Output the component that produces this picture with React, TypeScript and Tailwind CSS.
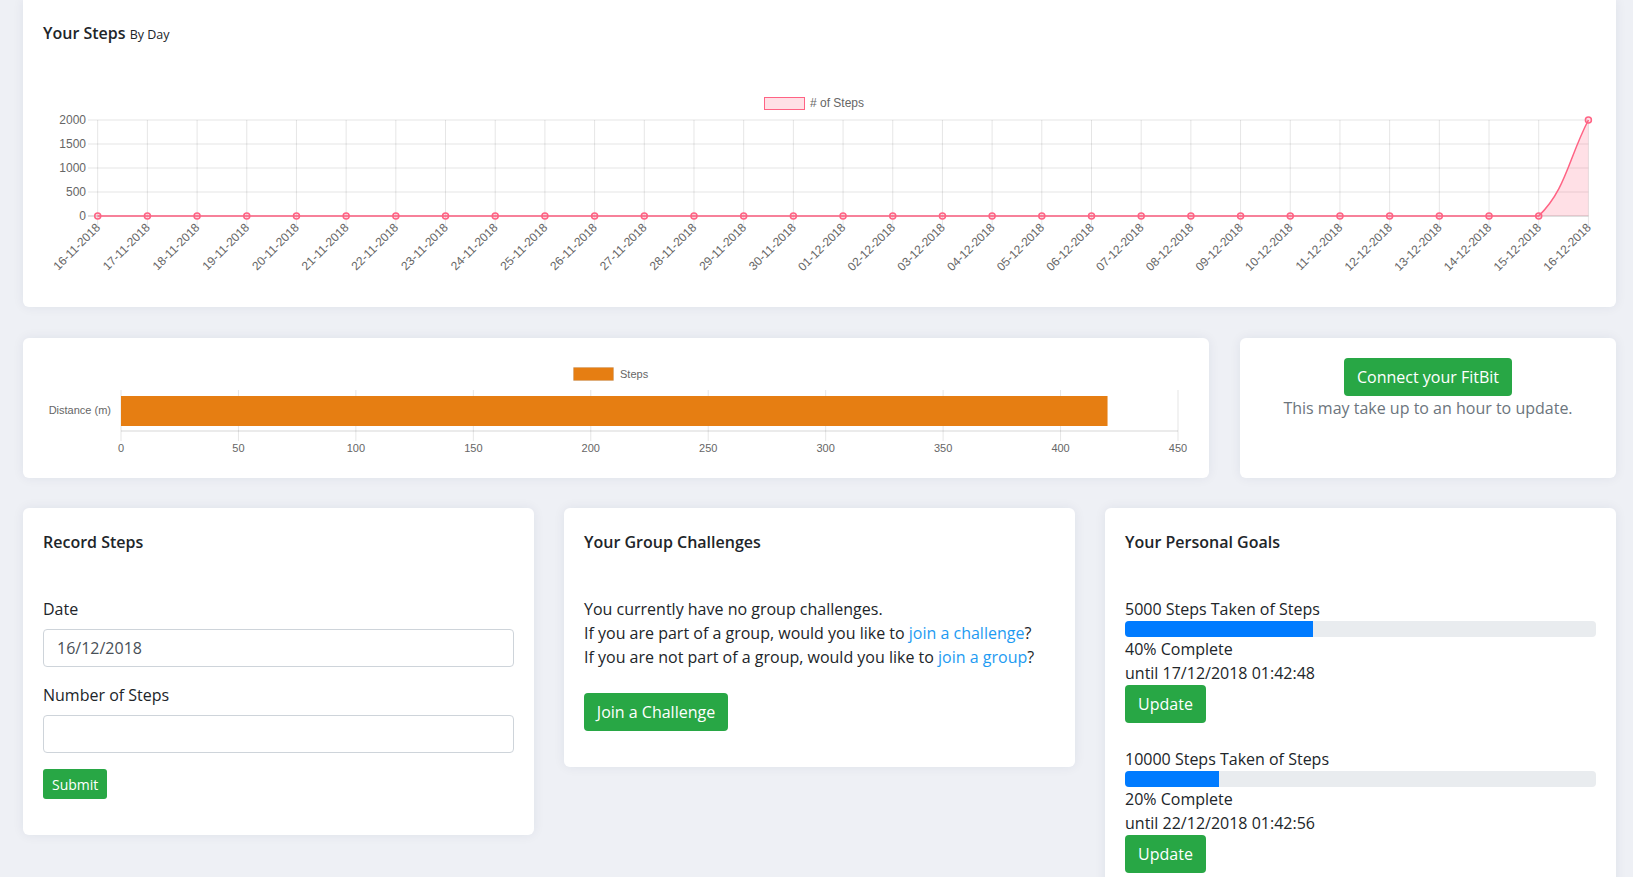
import React from "react";

const days: string[] = [];
for (let d = 16; d <= 30; d++) days.push(`${d}-11-2018`);
for (let d = 1; d <= 16; d++) days.push(`${String(d).padStart(2, "0")}-12-2018`);

const X0 = 97.7;
const X1 = 1588.4;
const STEP = (X1 - X0) / 30;
const TOP = 120;
const BASE = 216;

function StepsChart() {
  const xs = days.map((_, i) => X0 + i * STEP);
  const x29 = xs[29];
  const x30 = xs[30];
  const line = `M ${X0} ${BASE} L ${x29} ${BASE} C ${x29 + 27.2} 189.7 ${x30 - 19.9} 158.4 ${x30} ${TOP}`;
  const area = `${line} L ${x30} ${BASE} Z`;
  return (
    <svg viewBox="23 45 1593 262" width={1593} height={262} className="block" fontFamily="'Liberation Sans', Arial, sans-serif">
      {/* legend */}
      <rect x={764.5} y={97.5} width={40} height={12} fill="rgba(255,99,132,0.2)" stroke="rgb(255,99,132)" />
      <text x={810} y={103.5} fontSize={12} fill="#666" dominantBaseline="middle">
        # of Steps
      </text>
      {/* horizontal grid */}
      {[0, 1, 2, 3].map((k) => (
        <line key={k} x1={88} x2={X1} y1={TOP + k * 24} y2={TOP + k * 24} stroke="rgba(0,0,0,0.1)" />
      ))}
      <line x1={88} x2={X1} y1={BASE} y2={BASE} stroke="rgba(0,0,0,0.25)" />
      {["2000", "1500", "1000", "500", "0"].map((t, k) => (
        <text key={t} x={86} y={TOP + 0.5 + k * 24} fontSize={12} fill="#666" textAnchor="end" dominantBaseline="middle">
          {t}
        </text>
      ))}
      {/* vertical grid + labels */}
      {xs.map((x, i) => (
        <g key={i}>
          <line x1={x} x2={x} y1={TOP} y2={BASE + 10} stroke="rgba(0,0,0,0.1)" />
          <text
            transform={`translate(${x + 1} ${BASE + 10}) rotate(-45)`}
            fontSize={12}
            fill="#666"
            textAnchor="end"
            dominantBaseline="middle"
          >
            {days[i]}
          </text>
        </g>
      ))}
      <path d={area} fill="rgba(255,99,132,0.2)" />
      <path d={line} fill="none" stroke="rgb(255,99,132)" strokeWidth={1.5} />
      {xs.map((x, i) => (
        <circle key={i} cx={x} cy={i === 30 ? TOP : BASE} r={3} fill="rgba(255,99,132,0.2)" stroke="rgb(255,99,132)" strokeWidth={1.5} />
      ))}
    </svg>
  );
}

function DistanceChart() {
  const left = 121;
  const unit = (1178 - 121) / 450;
  const ticks = [0, 50, 100, 150, 200, 250, 300, 350, 400, 450];
  return (
    <svg viewBox="23 338 1186 140" width={1186} height={140} className="block" fontFamily="'Liberation Sans', Arial, sans-serif">
      <rect x={573.5} y={367.5} width={40} height={13} fill="#e67e12" stroke="rgba(0,0,0,0.08)" />
      <text x={620} y={375.5} fontSize={11} fill="#666" dominantBaseline="middle">
        Steps
      </text>
      {ticks.map((t) => {
        const x = left + t * unit;
        return (
          <g key={t}>
            <line x1={x} x2={x} y1={390} y2={441} stroke="rgba(0,0,0,0.1)" />
            <text x={x} y={449.5} fontSize={11} fill="#666" textAnchor="middle" dominantBaseline="middle">
              {t}
            </text>
          </g>
        );
      })}
      <line x1={left} x2={1178} y1={431} y2={431} stroke="rgba(0,0,0,0.08)" strokeWidth={2} />
      <rect x={left} y={396} width={420 * unit} height={30} fill="#e67e12" />
      <text x={111} y={411.5} fontSize={11} fill="#666" textAnchor="end" dominantBaseline="middle">
        Distance (m)
      </text>
    </svg>
  );
}

const card = "bg-white rounded-md shadow-[0_0_12px_rgba(30,40,90,0.07)]";
const btn = "bg-[#28a745] text-white rounded-[4px] h-[38px] px-3 text-[16px] leading-6";

function Goal({ label, pct, until }: { label: string; pct: number; until: string }) {
  return (
    <div>
      <p>{label}</p>
      <div className="h-4 w-full rounded-[4px] bg-[#e9ecef] overflow-hidden">
        <div className="h-4 bg-[#007bff]" style={{ width: `${pct}%` }} />
      </div>
      <p>{pct}% Complete</p>
      <p>until {until}</p>
      <button className={`${btn} w-[81px]`}>Update</button>
    </div>
  );
}

export default function App() {
  return (
    <div className="min-h-screen bg-[#eef0f5] pl-[23px] pr-[17px] text-[16px] leading-6 text-[#212529] font-['Open_Sans','Noto_Sans',sans-serif] overflow-hidden">
      <div className={`${card} rounded-t-none h-[307px]`}>
        <div className="pt-[21px] pl-[20px] h-[45px]">
          <span className="font-semibold text-[16px]">Your Steps</span>{" "}
          <span className="text-[12.5px]">By Day</span>
        </div>
        <StepsChart />
      </div>

      <div className="mt-[31px] grid grid-cols-[1186px_1fr] gap-[31px]">
        <div className={`${card} h-[140px]`}>
          <DistanceChart />
        </div>
        <div className={`${card} h-[140px] pt-[20px] flex flex-col items-center`}>
          <button className={`${btn} px-[12px] w-[168px]`}>Connect your FitBit</button>
          <p className="text-[#6c757d]">This may take up to an hour to update.</p>
        </div>
      </div>

      <div className="mt-[30px] grid grid-cols-3 gap-[30px] items-start">
        <div className={`${card} px-[20px] pt-[22px] pb-[36px]`}>
          <h5 className="font-semibold mb-[43px]">Record Steps</h5>
          <label className="block mb-2">Date</label>
          <input
            className="block w-full h-[38px] border border-[#ced4da] rounded-[4px] px-[13px] text-[#495057] mb-4 outline-none"
            defaultValue="16/12/2018"
          />
          <label className="block mb-2">Number of Steps</label>
          <input className="block w-full h-[38px] border border-[#ced4da] rounded-[4px] px-[13px] text-[#495057] mb-4 outline-none" />
          <button className="bg-[#28a745] text-white rounded-[3px] h-[30px] px-[9px] text-[14px] leading-[21px]">Submit</button>
        </div>

        <div className={`${card} px-[20px] pt-[22px] pb-[36px]`}>
          <h5 className="font-semibold mb-[43px]">Your Group Challenges</h5>
          <p>You currently have no group challenges.</p>
          <p>
            If you are part of a group, would you like to <a className="text-[#1e9bf2]">join a challenge</a>?
          </p>
          <p>
            If you are not part of a group, would you like to <a className="text-[#1e9bf2]">join a group</a>?
          </p>
          <button className={`${btn} mt-6 w-[144px]`}>Join a Challenge</button>
        </div>

        <div className={`${card} px-[20px] pt-[22px] pb-[36px]`}>
          <h5 className="font-semibold mb-[43px]">Your Personal Goals</h5>
          <div className="flex flex-col gap-6">
            <Goal label="5000 Steps Taken of Steps" pct={40} until="17/12/2018 01:42:48" />
            <Goal label="10000 Steps Taken of Steps" pct={20} until="22/12/2018 01:42:56" />
          </div>
        </div>
      </div>
    </div>
  );
}
